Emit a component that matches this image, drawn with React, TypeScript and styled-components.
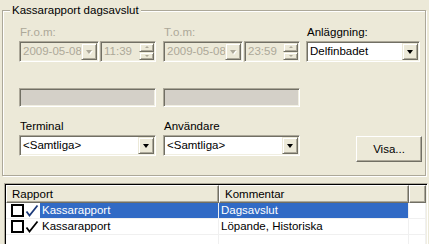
import styled, { createGlobalStyle } from "styled-components";

const GlobalStyle = createGlobalStyle`
  html, body {
    margin: 0;
    padding: 0;
    background: #ece9d8;
  }
  body {
    font-family: "Liberation Sans", Arial, sans-serif;
    font-size: 11.5px;
    color: #000;
  }
`;

const FACE = "#ece9d8";
const SHADOW = "#aca899";
const DARK = "#716f64";
const LIGHT = "#f1efe2";
const DISABLED = "#aca899";

export default function App() {
  return (
    <Window>
      <GlobalStyle />
      <Group>
        <Legend>Kassarapport dagsavslut</Legend>
        <Body>
          <Row>
            <Cell>
              <Label disabled>Fr.o.m:</Label>
              <DateRow>
                <Sunken width={80} disabled>
                  <FieldText disabled>2009-05-08</FieldText>
                  <DropButton>
                    <Arrow disabled />
                  </DropButton>
                </Sunken>
                <Sunken width={56} disabled>
                  <FieldText disabled>11:39</FieldText>
                  <Spin>
                    <SpinButton>
                      <SpinArrow up />
                    </SpinButton>
                    <SpinButton>
                      <SpinArrow />
                    </SpinButton>
                  </Spin>
                </Sunken>
              </DateRow>
            </Cell>
            <Cell>
              <Label disabled>T.o.m:</Label>
              <DateRow>
                <Sunken width={80} disabled>
                  <FieldText disabled>2009-05-08</FieldText>
                  <DropButton>
                    <Arrow disabled />
                  </DropButton>
                </Sunken>
                <Sunken width={56} disabled>
                  <FieldText disabled>23:59</FieldText>
                  <Spin>
                    <SpinButton>
                      <SpinArrow up />
                    </SpinButton>
                    <SpinButton>
                      <SpinArrow />
                    </SpinButton>
                  </Spin>
                </Sunken>
              </DateRow>
            </Cell>
            <Cell>
              <Label>Anläggning:</Label>
              <Sunken width={114}>
                <FieldText>Delfinbadet</FieldText>
                <DropButton>
                  <Arrow />
                </DropButton>
              </Sunken>
            </Cell>
          </Row>

          <Row top={26}>
            <GrayBox />
            <GrayBox />
          </Row>

          <Row top={13}>
            <Cell>
              <Label>Terminal</Label>
              <Sunken width={137}>
                <FieldText>&lt;Samtliga&gt;</FieldText>
                <DropButton>
                  <Arrow />
                </DropButton>
              </Sunken>
            </Cell>
            <Cell>
              <Label>Användare</Label>
              <Sunken width={137}>
                <FieldText>&lt;Samtliga&gt;</FieldText>
                <DropButton>
                  <Arrow />
                </DropButton>
              </Sunken>
            </Cell>
            <ButtonCell>
              <PushButton>Visa...</PushButton>
            </ButtonCell>
          </Row>
        </Body>
      </Group>

      <ListView>
        <Header>
          <HeadCell width={213}>Rapport</HeadCell>
          <HeadCell width={190}>Kommentar</HeadCell>
          <HeadCell grow />
        </Header>
        <ListRow>
          <ItemCell width={213}>
            <CheckBox />
            <Tick selected />
            <ItemText selected first>
              Kassarapport
            </ItemText>
          </ItemCell>
          <ItemCell width={190}>
            <ItemText selected>Dagsavslut</ItemText>
          </ItemCell>
          <ItemCell grow />
        </ListRow>
        <ListRow>
          <ItemCell width={213}>
            <CheckBox />
            <Tick />
            <ItemText first>Kassarapport</ItemText>
          </ItemCell>
          <ItemCell width={190}>
            <ItemText>Löpande, Historiska</ItemText>
          </ItemCell>
          <ItemCell grow />
        </ListRow>
        <ListRow>
          <ItemCell width={213} />
          <ItemCell width={190} />
          <ItemCell grow />
        </ListRow>
      </ListView>
    </Window>
  );
}

function Tick({ selected }: { selected?: boolean }) {
  return (
    <TickIcon width="14" height="14" viewBox="0 0 14 14">
      <path
        d="M1.5 7.5 L4.5 11.5 L12.5 1.5"
        fill="none"
        stroke={selected ? "#1c3a7a" : "#000"}
        strokeWidth="1.8"
      />
    </TickIcon>
  );
}

const Window = styled.div`
  width: 429px;
  height: 244px;
  overflow: hidden;
  padding: 4px 2px 0;
  box-sizing: border-box;
  background: ${FACE};
`;

const Group = styled.fieldset`
  margin: 0;
  padding: 0;
  width: 424px;
  box-sizing: border-box;
  border: 1px solid ${SHADOW};
  box-shadow: 1px 1px 0 #fff, inset 1px 1px 0 #fff;
  min-width: 0;
`;

const Legend = styled.legend`
  margin-left: 7px;
  padding: 0 2px;
  line-height: 13px;
  background: ${FACE};
`;

const Body = styled.div`
  padding: 9px 0 13px 16px;
`;

const Row = styled.div<{ top?: number }>`
  display: grid;
  grid-template-columns: 144px 143px 115px;
  margin-top: ${(p) => p.top ?? 0}px;
`;

const Cell = styled.div`
  display: flex;
  flex-direction: column;
`;

const ButtonCell = styled.div`
  display: flex;
  justify-content: flex-end;
  padding-top: 16px;
`;

const Label = styled.div<{ disabled?: boolean }>`
  line-height: 13px;
  margin: 0 0 2px 1px;
  color: ${(p) => (p.disabled ? DISABLED : "#000")};
`;

const DateRow = styled.div`
  display: flex;
  gap: 1px;
`;

const Sunken = styled.div<{ width: number; disabled?: boolean }>`
  width: ${(p) => p.width}px;
  height: 21px;
  box-sizing: border-box;
  display: flex;
  align-items: stretch;
  padding: 1px;
  border: 1px solid;
  border-color: ${SHADOW} #fff #fff ${SHADOW};
  box-shadow: inset 1px 1px 0 ${DARK}, inset -1px -1px 0 ${LIGHT};
  background: ${(p) => (p.disabled ? FACE : "#fff")};
`;

const FieldText = styled.div<{ disabled?: boolean }>`
  flex: 1;
  min-width: 0;
  overflow: hidden;
  white-space: nowrap;
  line-height: 17px;
  padding-left: 2px;
  color: ${(p) => (p.disabled ? DISABLED : "#000")};
`;

const Raised = styled.div`
  box-sizing: border-box;
  background: ${FACE};
  border: 1px solid;
  border-color: ${FACE} ${DARK} ${DARK} ${FACE};
  box-shadow: inset 1px 1px 0 #fff, inset -1px -1px 0 ${SHADOW};
  display: flex;
  align-items: center;
  justify-content: center;
`;

const DropButton = styled(Raised)`
  width: 16px;
  height: 17px;
  padding-top: 1px;
`;

const Arrow = styled.div<{ disabled?: boolean }>`
  width: 0;
  height: 0;
  border-left: 3.5px solid transparent;
  border-right: 3.5px solid transparent;
  border-top: 4px solid ${(p) => (p.disabled ? DISABLED : "#000")};
  ${(p) => (p.disabled ? `filter: drop-shadow(1px 1px 0 #fff);` : "")}
`;

const Spin = styled.div`
  width: 15px;
  display: flex;
  flex-direction: column;
`;

const SpinButton = styled(Raised)`
  flex: 1;
`;

const SpinArrow = styled.div<{ up?: boolean }>`
  width: 0;
  height: 0;
  border-left: 2px solid transparent;
  border-right: 2px solid transparent;
  ${(p) =>
    p.up
      ? `border-bottom: 2px solid ${DISABLED};`
      : `border-top: 2px solid ${DISABLED};`}
`;

const GrayBox = styled.div`
  width: 137px;
  height: 19px;
  box-sizing: border-box;
  border: 1px solid;
  border-color: ${SHADOW} #fff #fff ${SHADOW};
  box-shadow: inset 1px 1px 0 ${DARK}, inset -1px -1px 0 ${LIGHT};
  background: #d4d0c8;
`;

const PushButton = styled.button`
  width: 66px;
  height: 26px;
  margin-right: -1px;
  box-sizing: border-box;
  font-family: inherit;
  font-size: inherit;
  color: #000;
  background: ${FACE};
  border: 1px solid;
  border-color: #fff ${DARK} ${DARK} #fff;
  box-shadow: inset -1px -1px 0 ${SHADOW};
  padding: 0;
`;

const ListView = styled.div`
  margin: 7px 0 0 2px;
  width: 424px;
  height: 70px;
  box-sizing: border-box;
  border: 1px solid;
  border-color: ${SHADOW} #fff #fff ${SHADOW};
  box-shadow: inset 1px 1px 0 #000, inset -1px -1px 0 ${LIGHT};
  padding: 1px;
  background: #fff;
  overflow: hidden;
`;

const Header = styled.div`
  display: flex;
  height: 18px;
`;

const HeadCell = styled.div<{ width?: number; grow?: boolean }>`
  ${(p) => (p.grow ? "flex: 1;" : `width: ${p.width}px; flex: none;`)}
  box-sizing: border-box;
  line-height: 16px;
  padding-left: 5px;
  background: ${FACE};
  border: 1px solid;
  border-color: #fff ${DARK} ${DARK} #fff;
  box-shadow: inset -1px -1px 0 ${SHADOW};
`;

const ListRow = styled.div`
  display: flex;
  height: 16px;
`;

const ItemCell = styled.div<{ width?: number; grow?: boolean }>`
  ${(p) => (p.grow ? "flex: 1;" : `width: ${p.width}px; flex: none;`)}
  box-sizing: border-box;
  display: flex;
  align-items: center;
  border-right: 1px solid #f0f0f0;
  border-bottom: 1px solid #f0f0f0;
`;

const CheckBox = styled.div`
  width: 13px;
  height: 13px;
  box-sizing: border-box;
  margin-left: 5px;
  border: 2px solid #000;
  background: #fff;
  flex: none;
`;

const TickIcon = styled.svg`
  flex: none;
  margin-left: 1px;
`;

const ItemText = styled.div<{ selected?: boolean; first?: boolean }>`
  flex: 1;
  align-self: stretch;
  line-height: 15px;
  padding-left: 2px;
  margin-left: ${(p) => (p.first ? "1px" : "0")};
  white-space: nowrap;
  background: ${(p) => (p.selected ? "#316ac5" : "transparent")};
  color: ${(p) => (p.selected ? "#fff" : "#000")};
`;
